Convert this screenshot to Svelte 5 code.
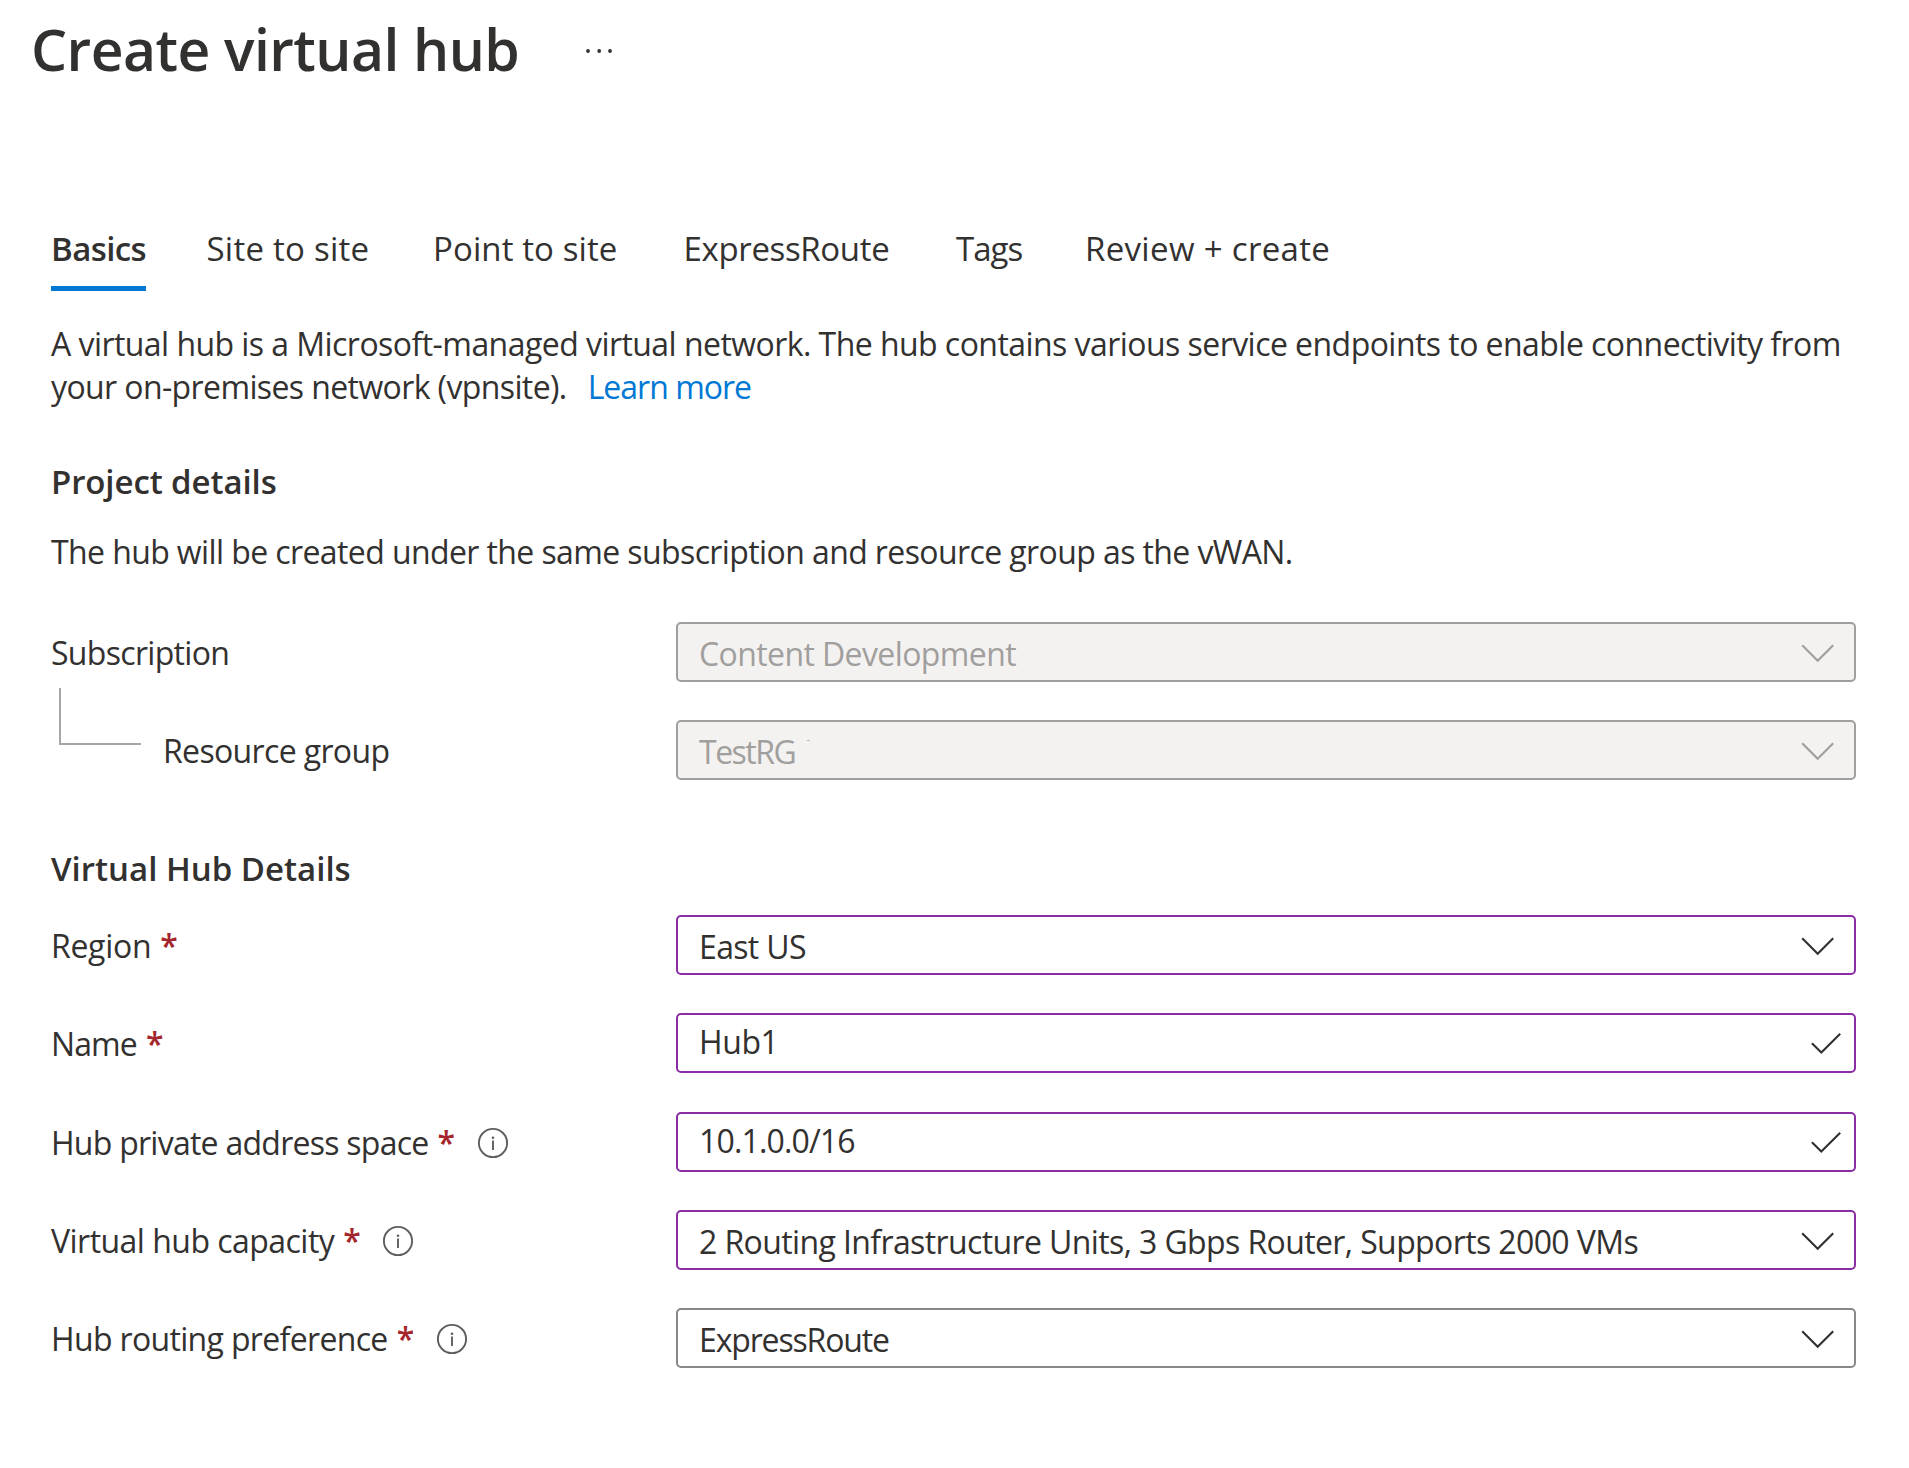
<script>
  // `track` is the letter-spacing, in pixels, of each piece of text.
  const tabs = [
    { text: 'Basics', track: -0.6, active: true },
    { text: 'Site to site', track: 0.25 },
    { text: 'Point to site', track: 0.1 },
    { text: 'ExpressRoute', track: -0.35 },
    { text: 'Tags', track: -1 },
    { text: 'Review + create', track: 0.33 }
  ];

  const projectFields = [
    { label: 'Subscription', track: -0.68, value: 'Content Development', valueTrack: -0.6, kind: 'select', state: 'disabled' },
    { label: 'Resource group', track: -0.65, value: 'TestRG', valueTrack: -1.5, kind: 'select', state: 'disabled', nested: true, mark: true }
  ];

  const hubFields = [
    { label: 'Region', track: -0.3, value: 'East US', valueTrack: -0.65, kind: 'select', state: 'edited', required: true },
    { label: 'Name', track: -0.9, value: 'Hub1', valueTrack: -0.4, kind: 'text', state: 'edited', required: true },
    { label: 'Hub private address space', track: -0.74, value: '10.1.0.0/16', valueTrack: -0.85, kind: 'text', state: 'edited', required: true, info: true },
    { label: 'Virtual hub capacity', track: -0.53, value: '2 Routing Infrastructure Units, 3 Gbps Router, Supports 2000 VMs', valueTrack: -0.61, kind: 'select', state: 'edited', required: true, info: true },
    { label: 'Hub routing preference', track: -0.66, value: 'ExpressRoute', valueTrack: -1.15, kind: 'select', state: 'normal', required: true, info: true }
  ];
</script>

{#snippet field(f)}
  <div class="row">
    <div class="label" class:nested={f.nested}>
      {#if f.nested}<span class="branch"></span>{/if}
      <span style:letter-spacing="{f.track}px">{f.label}</span>
      {#if f.required}<span class="star">*</span>{/if}
      {#if f.info}
        <svg class="info" viewBox="0 0 32 32" aria-hidden="true">
          <circle cx="16" cy="16" r="14.1" fill="none" stroke="#605e5c" stroke-width="1.9" />
          <circle cx="16" cy="10.7" r="1.3" fill="#605e5c" />
          <path d="M16 13.4V23" stroke="#605e5c" stroke-width="1.9" />
        </svg>
      {/if}
    </div>
    <div class="box {f.kind} {f.state}">
      <span class="value" style:letter-spacing="{f.valueTrack}px">{f.value}</span>
      {#if f.mark}<span class="mark"></span>{/if}
      <svg class="glyph" viewBox="0 0 44 56" aria-hidden="true">
        {#if f.kind === 'select'}
          <path d="M4.2 21.2L19.7 36.7L35.2 21.2" />
        {:else}
          <path d="M13.9 28.2L23.3 37.6L42.2 18.7" />
        {/if}
      </svg>
    </div>
  </div>
{/snippet}

<main>
  <header>
    <h1>Create virtual hub</h1>
    <svg class="more" viewBox="0 0 28 8" aria-label="More">
      <circle cx="4" cy="4" r="1.9" /><circle cx="15.2" cy="4" r="1.9" /><circle cx="26" cy="4" r="1.9" />
    </svg>
  </header>

  <nav>
    {#each tabs as tab}
      <span class="tab" class:active={tab.active} style:letter-spacing="{tab.track}px">{tab.text}</span>
    {/each}
  </nav>

  <p class="intro">
    <span class="first">A virtual hub is a Microsoft-managed virtual network. The hub contains various service endpoints to enable connectivity from</span><br />
    <span class="second">your on-premises network (vpnsite).</span><a href="#learn">Learn more</a>
  </p>

  <section>
    <h2>Project details</h2>
    <p class="note">The hub will be created under the same subscription and resource group as the vWAN.</p>
    <div class="fields">
      {#each projectFields as f}{@render field(f)}{/each}
    </div>
  </section>

  <section class="hub">
    <h2>Virtual Hub Details</h2>
    <div class="fields">
      {#each hubFields as f}{@render field(f)}{/each}
    </div>
  </section>
</main>

<style>
  :global(body) { background: #fff; }
  main {
    box-sizing: border-box;
    width: 1909px;
    height: 1468px;
    padding: 13px 53px 0 50px;
    overflow: hidden;
    font-family: "Open Sans", "Noto Sans", sans-serif;
    font-size: 32px;
    color: #323130;
    white-space: nowrap;
  }
  header { display: flex; height: 72px; margin-left: -19px; align-items: center; }
  h1 { margin: 0; width: 553px; font-size: 57px; line-height: 72px; font-weight: 600; letter-spacing: -0.55px; }
  .more { width: 28px; height: 8px; margin-top: 4px; fill: #323130; }

  nav {
    display: grid;
    grid-template-columns: 155.5px 226.5px 250.5px 272.5px 129px auto;
    justify-items: start;
    margin: 142px 0 0 1px;
  }
  .tab { font-size: 33px; line-height: 44px; padding-bottom: 15px; border-bottom: 5px solid transparent; }
  .tab.active { box-sizing: border-box; width: 95px; font-weight: 600; border-color: #0078d4; }

  p { margin: 0; line-height: 43px; }
  .intro { margin: 31px 0 0 1px; }
  .first { letter-spacing: -0.55px; }
  .second { letter-spacing: -0.61px; }
  a { margin-left: 21px; color: #0078d4; text-decoration: none; letter-spacing: -1px; }

  h2 { margin: 52px 0 0 1px; font-size: 33px; line-height: 44px; font-weight: 600; letter-spacing: -0.1px; }
  .note { margin: 26px 0 49px 1px; letter-spacing: -0.6px; }
  .hub h2 { margin: 67px 0 24px 1px; letter-spacing: 0; }

  .fields { display: grid; gap: 38px; }
  .hub .fields { gap: 38.3px; }
  .row { display: grid; grid-template-columns: 626px 1180px; height: 60px; }
  .label { position: relative; display: flex; align-items: center; padding: 1px 0 0 1px; line-height: 60px; }
  .label.nested { padding-left: 113px; }
  .branch {
    position: absolute;
    left: 9px;
    top: -32px;
    box-sizing: border-box;
    width: 82px;
    height: 57px;
    border-left: 2px solid #a6a6a6;
    border-bottom: 2px solid #a6a6a6;
  }
  .star { width: 16px; margin-left: 9px; color: #a4262c; font-weight: 600; }
  .info { width: 32px; height: 32px; margin-left: 23px; }

  .box { box-sizing: border-box; display: flex; height: 60px; padding: 0 12px 0 21px; border: 2px solid #8a8886; border-radius: 5px; }
  .value { line-height: 59px; }
  .text .value { line-height: 53px; }
  .mark { width: 3px; height: 1px; margin: 18px 0 0 12px; background: #bdbbb9; }
  .glyph { width: 44px; height: 56px; margin-left: auto; fill: none; stroke: #323130; stroke-width: 2.1; }
  .edited { border-color: #8a2da5; }
  .disabled { color: #a19f9d; background: #f3f2f1; border-color: #a19f9d; }
  .disabled .glyph { stroke: #a19f9d; }
</style>
